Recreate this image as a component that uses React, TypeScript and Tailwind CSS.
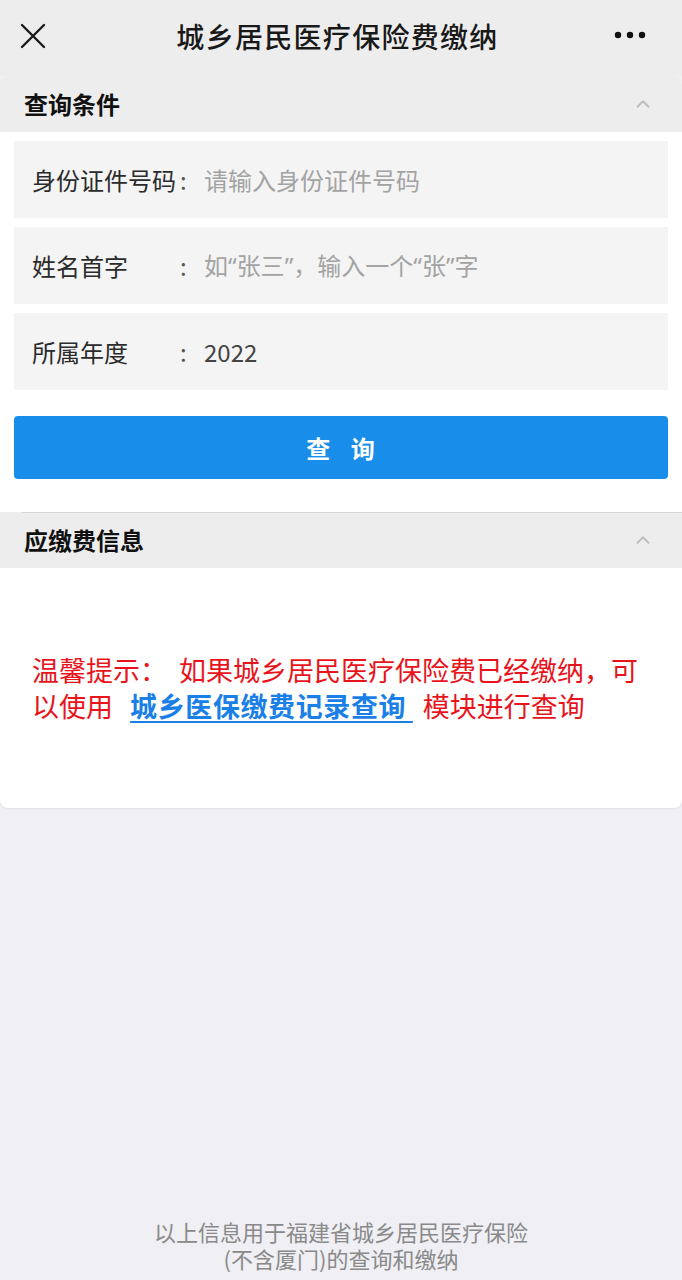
import { ChevronUp } from "lucide-react";

const font = { fontFamily: '"Noto Sans CJK SC", "Noto Sans", sans-serif' };

function SectionHeader({ title, divider }: { title: string; divider?: boolean }) {
  return (
    <div className="relative flex h-[56px] items-center justify-between bg-[#ededed] pl-[24px] pr-[28px]">
      {divider && <div className="absolute left-[22px] right-0 top-0 h-px bg-[#d6d6d6]" />}
      <span className="text-[24px] font-bold text-[#111]">{title}</span>
      <ChevronUp className="h-[22px] w-[22px] text-[#bdbdbd]" strokeWidth={2} />
    </div>
  );
}

// quotes in a latin face so they stay narrow, like the reference
function Q({ children }: { children: string }) {
  return <span style={{ fontFamily: '"Noto Sans", sans-serif' }}>{children}</span>;
}

function FieldRow({ label, children, muted }: { label: string; children: React.ReactNode; muted?: boolean }) {
  return (
    <div className="flex h-[77px] items-center bg-[#f4f4f4] px-[18px] text-[24px]">
      <span className="w-[148px] text-[#2b2b2b]">{label}</span>
      <span className="w-[24px] text-[#555]">:</span>
      <span className={muted ? "text-[#a3a3a3]" : "text-[#444]"}>{children}</span>
    </div>
  );
}

export default function App() {
  return (
    <div className="flex min-h-[1280px] w-[682px] flex-col bg-[#efeff4]" style={font}>
      {/* top bar */}
      <div className="flex h-[76px] items-center justify-between bg-[#ededed] px-[18px]">
        <svg width="28" height="28" viewBox="0 0 28 28" className="ml-[1px] -mt-[4px]">
          <path d="M3 3 L25 25 M25 3 L3 25" stroke="#1b1b1b" strokeWidth="2.4" strokeLinecap="round" />
        </svg>
        <span className="-mt-[4px] ml-[14px] text-[28px] font-medium tracking-[1.3px] text-[#191919]">城乡居民医疗保险费缴纳</span>
        <svg width="36" height="8" viewBox="0 0 36 8" className="-mt-[6px] mr-[14px]">
          <circle cx="4" cy="4" r="3.2" fill="#111" />
          <circle cx="16" cy="4" r="3.2" fill="#111" />
          <circle cx="28" cy="4" r="3.2" fill="#111" />
        </svg>
      </div>

      {/* card */}
      <div className="overflow-hidden rounded-[8px] bg-white shadow-[0_1px_2px_rgba(0,0,0,0.06)]">
        <SectionHeader title="查询条件" />
        <div className="flex flex-col gap-[9px] px-[14px] pt-[9px]">
          <FieldRow label="身份证件号码" muted>请输入身份证件号码</FieldRow>
          <FieldRow label="姓名首字" muted>
            如<Q>“</Q>张三<Q>”</Q>，输入一个<Q>“</Q>张<Q>”</Q>字
          </FieldRow>
          <FieldRow label="所属年度">2022</FieldRow>
        </div>
        <div className="px-[14px] pb-[33px] pt-[26px]">
          <button className="flex h-[63px] w-full items-center justify-center rounded-[4px] bg-[#188eea] text-[24px] font-bold tracking-[1px] text-white">
            查&nbsp;&nbsp;&nbsp;询
          </button>
        </div>
        <SectionHeader title="应缴费信息" divider />
        <div className="flex h-[240px] items-center pl-[32px] pr-[24px]">
          <p className="text-[27px] leading-[36px] text-[#e8141c]">
            温馨提示：&nbsp;&nbsp;如果城乡居民医疗保险费已经缴纳，可以使用&nbsp;&nbsp;
            <a className="ml-[5px] mr-[10px] font-bold tracking-[0.6px] text-[#1a7fe6] underline underline-offset-[4px]">
              城乡医保缴费记录查询&nbsp;
            </a>
            模块进行查询
          </p>
        </div>
      </div>

      {/* footer */}
      <div className="mt-auto pb-[8px] text-center text-[22px] leading-[27px] text-[#8a8a8a]">
        <p>以上信息用于福建省城乡居民医疗保险</p>
        <p>(不含厦门)的查询和缴纳</p>
      </div>
    </div>
  );
}
